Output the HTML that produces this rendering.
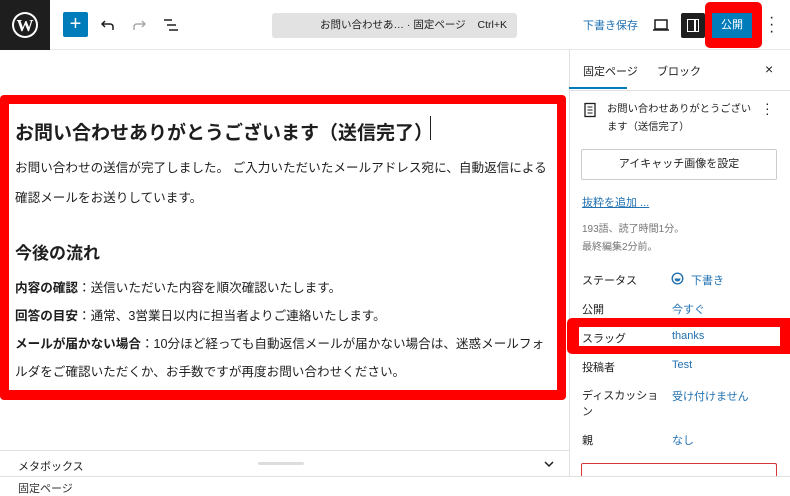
<!DOCTYPE html>
<html><head><meta charset="utf-8"><style>
*{box-sizing:border-box;margin:0;padding:0}
body{width:790px;height:496px;overflow:hidden;background:#fff;font-family:"Liberation Sans","Noto Sans CJK JP",sans-serif;color:#1e1e1e;position:relative}
.abs{position:absolute;white-space:nowrap}
.top{left:0;top:0;width:790px;height:50px;border-bottom:1px solid #e6e6e6}
.wp{left:0;top:0;width:50px;height:50px;background:#1e1e1e}
.link{color:#2271b1}
.side{left:569px;top:50px;width:221px;height:426px;border-left:1px solid #e0e0e0}
.lbl{font-size:11px;color:#1e1e1e}
.val{font-size:11px;color:#2271b1}
.ed{font-size:12.6px;line-height:28px;left:15px}
</style></head><body>
<div class="abs top"></div>
<div class="abs wp"><svg width="50" height="50" viewBox="0 0 50 50"><circle cx="25" cy="25" r="13" fill="#fff"/><circle cx="25" cy="25" r="11" fill="#1e1e1e"/><text x="25" y="31" text-anchor="middle" font-family="Liberation Serif" font-size="17" font-weight="bold" fill="#fff">W</text></svg></div>
<div class="abs" style="left:63px;top:12px;width:25px;height:25px;background:#007cba;border-radius:2px;color:#fff;font-size:20px;line-height:24px;text-align:center">+</div>
<svg class="abs" style="left:99px;top:16px" width="18" height="18" viewBox="0 0 18 18"><path d="M6 5 L3 8 L6 11 M3 8 H11 Q14 8 14 11 V14" fill="none" stroke="#1e1e1e" stroke-width="1.5"/></svg>
<svg class="abs" style="left:130px;top:16px" width="18" height="18" viewBox="0 0 18 18"><path d="M12 5 L15 8 L12 11 M15 8 H7 Q4 8 4 11 V14" fill="none" stroke="#aaa" stroke-width="1.5"/></svg>
<svg class="abs" style="left:162px;top:16px" width="18" height="18" viewBox="0 0 18 18"><path d="M2 4H10M5 9H14M7 14H16" stroke="#1e1e1e" stroke-width="1.5"/></svg>
<div class="abs" style="left:272px;top:13px;width:245px;height:25px;background:#e2e2e2;border-radius:3px;font-size:10.5px;line-height:25px"><span style="position:absolute;left:48px">お問い合わせあ… · 固定ページ</span><span style="position:absolute;right:10px">Ctrl+K</span></div>
<div class="abs link" style="left:583px;top:17px;font-size:11px">下書き保存</div>
<svg class="abs" style="left:652px;top:16px" width="18" height="18" viewBox="0 0 18 18"><rect x="3" y="4" width="12" height="9" fill="none" stroke="#1e1e1e" stroke-width="1.5"/><path d="M1 14H17" stroke="#1e1e1e" stroke-width="1.5"/></svg>
<div class="abs" style="left:681px;top:13px;width:24px;height:25px;background:#1e1e1e;border-radius:2px"><div style="position:absolute;left:6px;top:6px;width:12px;height:13px;border:1.5px solid #fff"></div><div style="position:absolute;left:13px;top:6px;width:1.5px;height:13px;background:#fff"></div></div>
<div class="abs" style="left:705px;top:2px;width:57px;height:46px;background:#f00;border-radius:5px"></div>
<div class="abs" style="left:712px;top:13px;width:40px;height:25px;background:#007cba;color:#fff;font-size:11px;line-height:25px;text-align:center">公開</div>
<div class="abs" style="left:769px;top:14px;font-size:16px;line-height:7px;color:#1e1e1e">·<br>·<br>·</div>

<!-- editor -->
<div class="abs" style="left:0;top:95px;width:566px;height:305px;background:#f00;border-radius:4px"></div>
<div class="abs" style="left:9px;top:104px;width:548px;height:286px;background:#fff"></div>
<div class="abs" style="left:15px;top:118px;font-size:19px;font-weight:bold">お問い合わせありがとうございます（送信完了）</div>
<div class="abs" style="left:430px;top:116px;width:1px;height:24px;background:#1e1e1e"></div>
<div class="abs ed" style="top:153px;line-height:30px">お問い合わせの送信が完了しました。 ご入力いただいたメールアドレス宛に、自動返信による<br>確認メールをお送りしています。</div>
<div class="abs" style="left:15px;top:239px;font-size:17px;font-weight:bold">今後の流れ</div>
<div class="abs ed" style="top:274px"><b>内容の確認</b>：送信いただいた内容を順次確認いたします。<br><b>回答の目安</b>：通常、3営業日以内に担当者よりご連絡いたします。<br><b>メールが届かない場合</b>：10分ほど経っても自動返信メールが届かない場合は、迷惑メールフォ<br>ルダをご確認いただくか、お手数ですが再度お問い合わせください。</div>

<div class="abs" style="left:0;top:450px;width:569px;height:1px;background:#e0e0e0"></div>
<div class="abs" style="left:18px;top:458px;font-size:11px">メタボックス</div>
<div class="abs" style="left:258px;top:462px;width:46px;height:3px;background:#ddd;border-radius:2px"></div>
<svg class="abs" style="left:543px;top:459px" width="12" height="10"><path d="M2 3L6 7L10 3" fill="none" stroke="#1e1e1e" stroke-width="1.5"/></svg>
<div class="abs" style="left:0;top:476px;width:790px;height:1px;background:#e0e0e0"></div>
<div class="abs" style="left:18px;top:480px;font-size:11px;color:#333">固定ページ</div>

<!-- sidebar -->
<div class="abs side"></div>
<div class="abs" style="left:569px;top:90px;width:221px;height:1px;background:#e0e0e0"></div>
<div class="abs" style="left:583px;top:63px;font-size:11px">固定ページ</div>
<div class="abs" style="left:569px;top:87px;width:58px;height:2px;background:#007cba"></div>
<div class="abs" style="left:657px;top:63px;font-size:11px">ブロック</div>
<div class="abs" style="left:765px;top:61px;font-size:14px">×</div>
<svg class="abs" style="left:583px;top:102px" width="14" height="16"><rect x="2" y="1.5" width="10" height="13" fill="none" stroke="#1e1e1e" stroke-width="1.3"/><path d="M4.5 5H9.5M4.5 8H9.5M4.5 11H9.5" stroke="#1e1e1e"/></svg>
<div class="abs" style="left:607px;top:101px;font-size:10.3px;line-height:18px">お問い合わせありがとうござい<br>ます（送信完了）</div>
<div class="abs" style="left:765px;top:101px;font-size:14px;line-height:5px">·<br>·<br>·</div>
<div class="abs" style="left:581px;top:149px;width:196px;height:31px;border:1px solid #ccc;border-radius:2px;font-size:11px;line-height:29px;text-align:center">アイキャッチ画像を設定</div>
<div class="abs link" style="left:582px;top:194px;font-size:11px;text-decoration:underline">抜粋を追加 ...</div>
<div class="abs" style="left:582px;top:221px;font-size:10px;line-height:18px;color:#757575">193語、読了時間1分。<br>最終編集2分前。</div>
<div class="abs lbl" style="left:582px;top:272px">ステータス</div>
<svg class="abs" style="left:671px;top:272px" width="13" height="13"><circle cx="6.5" cy="6.5" r="5.3" fill="none" stroke="#2271b1" stroke-width="1.4"/><path d="M3.5 6.5H9.5A3 3 0 0 1 3.5 6.5" fill="#2271b1"/></svg>
<div class="abs val" style="left:691px;top:272px">下書き</div>
<div class="abs lbl" style="left:582px;top:301px">公開</div>
<div class="abs val" style="left:672px;top:301px">今すぐ</div>
<div class="abs" style="left:567px;top:318px;width:223px;height:36px;background:#f00;border-radius:5px 0 0 5px"></div>
<div class="abs" style="left:579px;top:327px;width:201px;height:19px;background:#fff"></div>
<div class="abs lbl" style="left:582px;top:330px">スラッグ</div>
<div class="abs val" style="left:672px;top:330px">thanks</div>
<div class="abs lbl" style="left:582px;top:359px">投稿者</div>
<div class="abs val" style="left:672px;top:359px">Test</div>
<div class="abs lbl" style="left:582px;top:388px;line-height:16px">ディスカッショ<br>ン</div>
<div class="abs val" style="left:672px;top:388px">受け付けません</div>
<div class="abs lbl" style="left:582px;top:432px">親</div>
<div class="abs val" style="left:672px;top:432px">なし</div>
<div class="abs" style="left:581px;top:463px;width:196px;height:13px;border:1px solid #d63638;border-bottom:none;border-radius:2px 2px 0 0"></div>
</body></html>
